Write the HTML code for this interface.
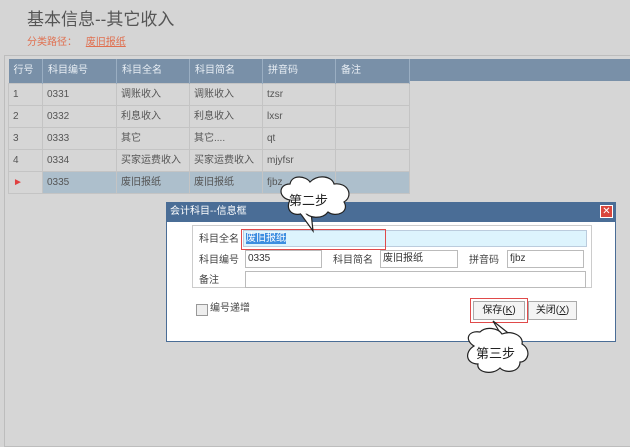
<!DOCTYPE html>
<html><head><meta charset="utf-8"><style>
body{margin:0;width:630px;height:440px;background:#d5d5d5;font-family:"Liberation Sans","Noto Sans CJK SC",sans-serif;position:relative;overflow:hidden;font-size:10px;line-height:14px;color:#444}
.a{position:absolute}
table{border-collapse:collapse;position:absolute;left:8px;top:59px;table-layout:fixed;width:401px}
td{height:21px;line-height:21px;border:1px solid #c4c4c4;padding:0 0 0 4px;font-size:10px;color:#555;white-space:nowrap;overflow:hidden;vertical-align:middle}
th{height:22px;line-height:22px;background:#7990a8;color:#e8eef4;font-weight:normal;text-align:left;padding-left:5px;border-right:1px solid #9aaec2;font-size:10px}
.inp{position:absolute;background:#fff;border:1px solid #bbb;height:16px;font-size:10px;line-height:16px;padding-left:2px;color:#333;box-sizing:border-box}
.btn{position:absolute;background:#f4f4f4;border:1px solid #aaa;font-size:10px;text-align:center;line-height:17px;height:19px;box-sizing:border-box;color:#222}
</style></head><body>
<div class="a" style="left:27px;top:8px;font-size:17px;line-height:24px;color:#555">基本信息--其它收入</div>
<div class="a" style="left:27px;top:36px;font-size:10px;color:#e07050">分类路径： <span style="text-decoration:underline;margin-left:6px">废旧报纸</span></div>
<div class="a" style="left:4px;top:55px;width:630px;height:390px;border:1px solid #bdbdbd;background:#d6d6d6"></div>
<div class="a" style="left:410px;top:59px;width:220px;height:22px;background:#7990a8"></div>
<table>
<colgroup><col style="width:34px"><col style="width:74px"><col style="width:73px"><col style="width:73px"><col style="width:73px"><col style="width:74px"></colgroup>
<tr><th>行号</th><th>科目编号</th><th>科目全名</th><th>科目简名</th><th>拼音码</th><th>备注</th></tr>
<tr><td>1</td><td>0331</td><td>调账收入</td><td>调账收入</td><td>tzsr</td><td></td></tr>
<tr><td>2</td><td>0332</td><td>利息收入</td><td>利息收入</td><td>lxsr</td><td></td></tr>
<tr><td>3</td><td>0333</td><td>其它</td><td>其它....</td><td>qt</td><td></td></tr>
<tr><td>4</td><td>0334</td><td>买家运费收入</td><td>买家运费收入</td><td>mjyfsr</td><td></td></tr>
<tr><td style="color:#e04040">►</td><td style="background:#adbfcc">0335</td><td style="background:#adbfcc">废旧报纸</td><td style="background:#adbfcc">废旧报纸</td><td style="background:#adbfcc">fjbz</td><td style="background:#adbfcc"></td></tr>
</table>
<div class="a" style="left:166px;top:202px;width:450px;height:140px;background:#fff;border:1px solid #4a6d96;box-sizing:border-box"></div>
<div class="a" style="left:166px;top:202px;width:450px;height:20px;background:#4a6d96;color:#fff;font-size:10px;line-height:20px;padding-left:4px;box-sizing:border-box">会计科目--信息框</div>
<div class="a" style="left:600px;top:205px;width:13px;height:13px;background:#d9463c;border:1px solid #fff;box-sizing:border-box;color:#fff;font-size:10px;line-height:11px;text-align:center">✕</div>
<div class="a" style="left:192px;top:225px;width:400px;height:63px;border:1px solid #ccc;box-sizing:border-box"></div>
<div class="a" style="left:199px;top:233px">科目全名</div>
<div class="inp" style="left:243px;top:230px;width:344px;height:17px;background:#ddf4fd;border-color:#bcd"><span style="background:#3d8ee0;color:#fff">废旧报纸</span></div>
<div class="a" style="left:241px;top:229px;width:145px;height:21px;border:1px solid #e04a4a;box-sizing:border-box"></div>
<div class="a" style="left:199px;top:254px">科目编号</div>
<div class="inp" style="left:245px;top:250px;width:77px;height:18px">0335</div>
<div class="a" style="left:333px;top:254px">科目简名</div>
<div class="inp" style="left:380px;top:250px;width:78px;height:18px">废旧报纸</div>
<div class="a" style="left:469px;top:254px">拼音码</div>
<div class="inp" style="left:507px;top:250px;width:77px;height:18px">fjbz</div>
<div class="a" style="left:199px;top:274px">备注</div>
<div class="inp" style="left:245px;top:271px;width:341px;height:17px"></div>
<div class="a" style="left:196px;top:304px;width:10px;height:10px;border:1px solid #999;background:#eee"></div>
<div class="a" style="left:210px;top:302px">编号递增</div>
<div class="btn" style="left:473px;top:301px;width:52px">保存(<u>K</u>)</div>
<div class="a" style="left:470px;top:298px;width:58px;height:25px;border:1px solid #e04a4a;box-sizing:border-box"></div>
<div class="btn" style="left:528px;top:301px;width:49px">关闭(<u>X</u>)</div>
<svg class="a" style="left:0;top:0" width="630" height="440">
<g fill="#fff" stroke="#222" stroke-width="1.2">
<path d="M300 213 L313 231 L311 212Z"/>
<path d="M290 200 C278 198 278 184 290 184 C292 174 306 176 310 182 C318 174 332 176 334 184 C348 182 354 196 344 202 C350 212 336 218 328 212 C322 220 308 218 305 212 C296 218 284 212 290 200Z"/>
<path d="M502 336 L493 321 L512 336Z"/>
<path d="M474 346 C464 340 468 330 480 332 C486 326 498 328 502 334 C512 330 524 336 522 344 C532 350 528 362 520 362 C520 372 506 374 500 368 C492 376 476 372 478 364 C466 364 464 352 474 346Z"/>
</g>
<path d="M301 213 L310 212" stroke="#fff" stroke-width="2.5"/>
<path d="M494 336 L511 336" stroke="#fff" stroke-width="2.5"/>
<text x="289" y="205" font-size="13" fill="#222" font-family="Liberation Sans,Noto Sans CJK SC,sans-serif">第二步</text>
<text x="476" y="358" font-size="13" fill="#222" font-family="Liberation Sans,Noto Sans CJK SC,sans-serif">第三步</text>
</svg>
</body></html>
